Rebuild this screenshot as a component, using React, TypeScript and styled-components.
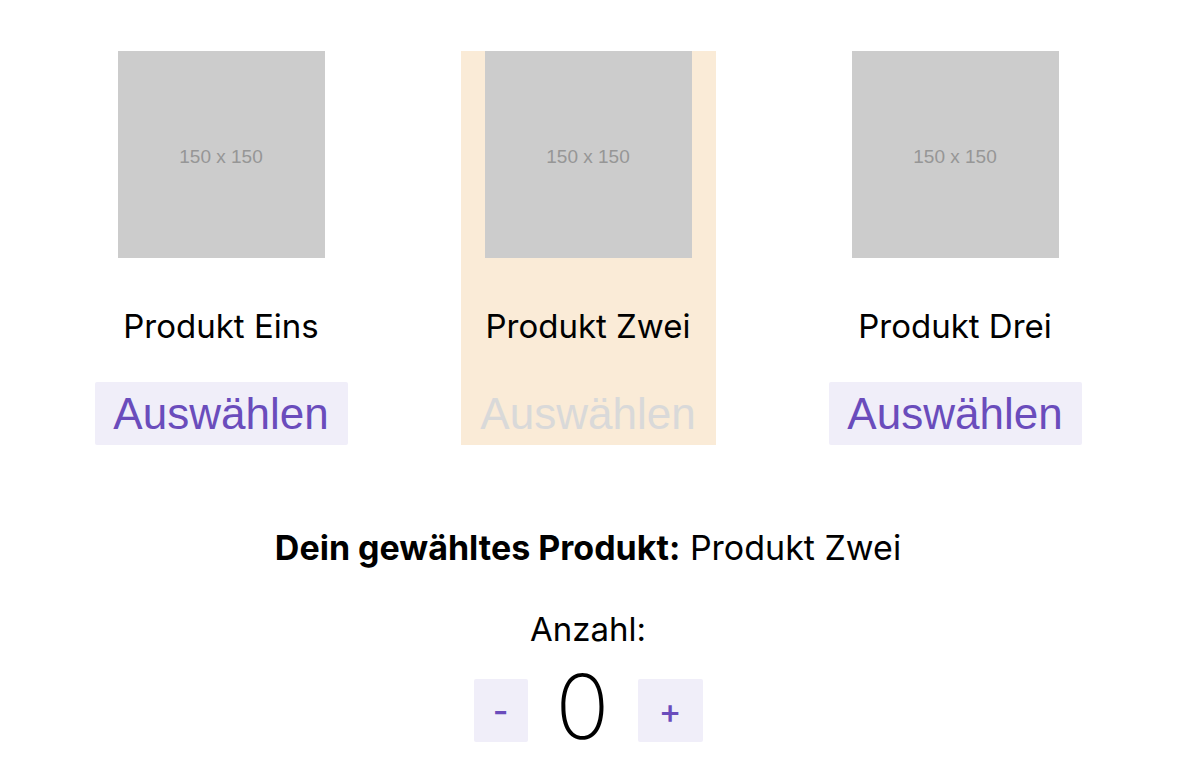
import React, { useState } from 'react'
import styled, { createGlobalStyle } from 'styled-components'

const products = ['Produkt Eins', 'Produkt Zwei', 'Produkt Drei']

export default function App() {
  const [selected, setSelected] = useState(1)
  const [count, setCount] = useState(0)

  return (
    <Page>
      <GlobalStyle />
      <Cards>
        {products.map((name, i) => (
          <Card key={name} $active={selected === i}>
            <Placeholder>150 x 150</Placeholder>
            <Name>{name}</Name>
            <SelectButton disabled={selected === i} onClick={() => setSelected(i)}>
              Auswählen
            </SelectButton>
          </Card>
        ))}
      </Cards>
      <Summary>
        <b>Dein gewähltes Produkt:</b> {products[selected]}
      </Summary>
      <CountLabel>Anzahl:</CountLabel>
      <Counter>
        <StepButton $w={54} onClick={() => setCount(Math.max(0, count - 1))}>
          -
        </StepButton>
        <Count>{count}</Count>
        <StepButton $w={65} onClick={() => setCount(count + 1)}>
          +
        </StepButton>
      </Counter>
    </Page>
  )
}

const GlobalStyle = createGlobalStyle`
  body {
    margin: 0;
    background: #fff;
    font-family: Inter, "Liberation Sans", sans-serif;
    color: #000;
  }
`

const Page = styled.div`
  width: 1200px;
  height: 778px;
  display: flex;
  flex-flow: column;
  align-items: center;
  padding-top: 51px;
  padding-right: 24px;
  box-sizing: border-box;
  overflow: hidden;
`

const Cards = styled.div`
  display: flex;
  gap: 112px;
`

const Card = styled.div<{ $active: boolean }>`
  width: 255px;
  display: flex;
  flex-flow: column;
  align-items: center;
  background: ${(p) => (p.$active ? '#faebd7' : 'transparent')};
`

const Placeholder = styled.div`
  width: 207px;
  height: 207px;
  background: #cccccc;
  color: #969696;
  display: grid;
  place-items: center;
  padding-top: 4px;
  box-sizing: border-box;
  font-family: 'Liberation Sans', Arial, sans-serif;
  font-size: 19px;
`

const Name = styled.div`
  margin-top: 49px;
  font-size: 33px;
  line-height: 38px;
  height: 38px;
`

const SelectButton = styled.button`
  margin-top: 37px;
  width: 253px;
  height: 63px;
  border: none;
  border-radius: 2px;
  background: #f0eef9;
  color: #6a4cbc;
  font-family: 'Liberation Sans', Arial, sans-serif;
  font-size: 44px;
  line-height: 63px;
  cursor: pointer;
  padding: 0;

  &:disabled {
    background: transparent;
    color: #d9d9d9;
    cursor: default;
  }
`

const Summary = styled.div`
  margin-top: 83px;
  font-size: 34px;
  line-height: 40px;

  b {
    font-weight: 700;
  }
`

const CountLabel = styled.div`
  margin-top: 41px;
  font-size: 33px;
  line-height: 40px;
`

const Counter = styled.div`
  margin-top: 18px;
  display: flex;
  align-items: center;
  gap: 24px;
`

const StepButton = styled.button<{ $w: number }>`
  width: ${(p) => p.$w}px;
  height: 63px;
  margin-top: 6px;
  border: none;
  border-radius: 2px;
  background: #f0eef9;
  color: #6a4cbc;
  font-family: Inter, sans-serif;
  font-size: 34px;
  font-weight: 500;
  padding: 0;
  cursor: pointer;
`

const Count = styled.div`
  font-size: 90px;
  font-weight: 200;
  line-height: 80px;
  width: 62px;
  text-align: center;
`
